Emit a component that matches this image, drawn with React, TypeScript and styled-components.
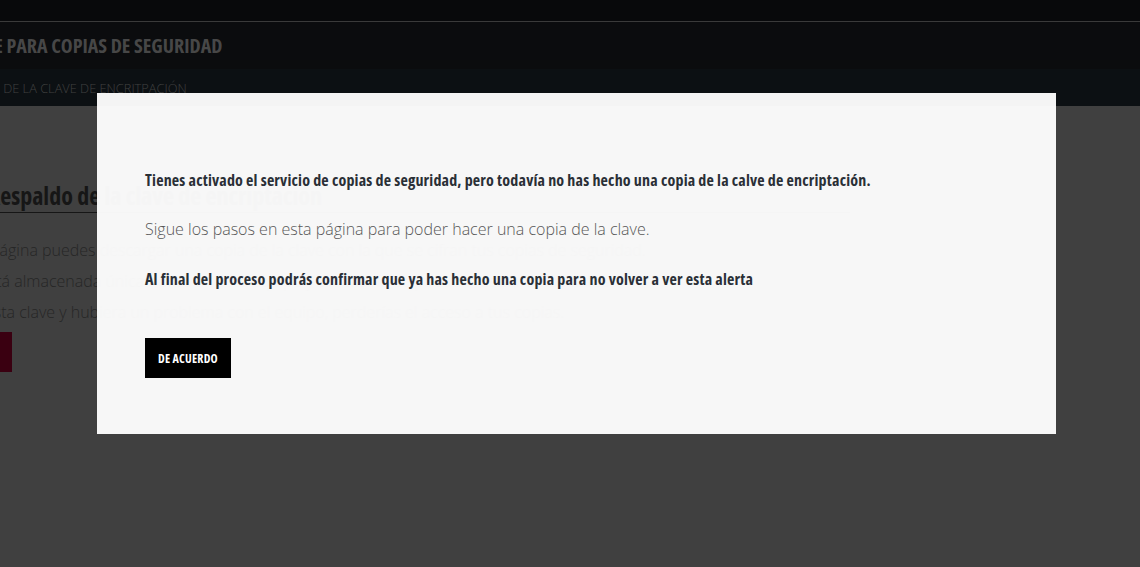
import { FC } from "react";
import styled, { createGlobalStyle } from "styled-components";

const GlobalStyle = createGlobalStyle`
  html, body {
    margin: 0;
    padding: 0;
    background: #404040;
    overflow: hidden;
  }
  body {
    font-family: "Open Sans", "Liberation Sans", sans-serif;
  }
`;

const condensed = `
  font-family: "Open Sans", "Liberation Sans", sans-serif;
  font-stretch: 75%;
  font-weight: 700;
`;

const Page = styled.div`
  position: relative;
  width: 1140px;
  height: 567px;
  overflow: hidden;
  background: #404040;
`;

const TopBar = styled.div`
  height: 21px;
  background: #08090b;
  border-bottom: 1px solid #3a3a3a;
`;

const TitleBar = styled.div`
  height: 47px;
  display: flex;
  align-items: center;
  background: #0b0c0e;
`;

const Title = styled.h1`
  ${condensed}
  margin: 0 0 0 -141px;
  font-size: 20px;
  line-height: 24px;
  color: #474747;
  white-space: nowrap;
`;

const SubBar = styled.div`
  height: 37px;
  display: flex;
  align-items: center;
  background: #0c1013;
`;

const Breadcrumb = styled.span`
  margin-left: -110px;
  padding-top: 1px;
  font-size: 12.8px;
  font-weight: 300;
  color: #404040;
  white-space: nowrap;
`;

const Content = styled.main`
  width: 850px;
  padding-top: 74px;
`;

const Heading = styled.h2`
  ${condensed}
  margin: 0 0 0 -12px;
  font-size: 24px;
  line-height: 32px;
  color: #161616;
  border-bottom: 1px solid #161616;
  white-space: nowrap;
`;

const Lines = styled.div`
  margin-top: 22px;
  display: flex;
  flex-direction: column;
`;

const Line = styled.p<{ $shift: number }>`
  margin: 0 0 0 ${({ $shift }) => -$shift}px;
  font-size: 16px;
  font-weight: 300;
  line-height: 31px;
  color: #262626;
  white-space: nowrap;
`;

const RedButton = styled.div`
  margin: 4px 0 0 -90px;
  width: 102px;
  height: 40px;
  background: #3a0011;
`;

const Modal = styled.div`
  position: absolute;
  left: 97px;
  top: 93px;
  width: 959px;
  height: 341px;
  box-sizing: border-box;
  padding: 77px 48px 0;
  background: rgba(255, 255, 255, 0.955);
  display: flex;
  flex-direction: column;
  align-items: flex-start;
`;

const Strong = styled.p<{ $gap?: number }>`
  ${condensed}
  margin: ${({ $gap = 0 }) => $gap}px 0 0;
  font-size: 16px;
  line-height: 20px;
  letter-spacing: 0.18px;
  color: #2a2f36;
`;

const Light = styled.p`
  margin: 29px 0 0;
  font-size: 16px;
  font-weight: 300;
  line-height: 20px;
  color: #575757;
`;

const OkButton = styled.button`
  ${condensed}
  margin-top: 49px;
  height: 40px;
  padding: 0 13px;
  border: 0;
  background: #000;
  color: #fff;
  font-size: 12px;
  letter-spacing: 0.2px;
  cursor: pointer;
`;

const lines = [
  { shift: 10, text: "página puedes descargar una copia de la clave con la que se cifran tus copias de seguridad." },
  { shift: 20, text: "está almacenada únicamente en este equipo y sin ella no se pueden restaurar los datos." },
  { shift: 15, text: "esta clave y hubiera un problema con el equipo, perderías el acceso a tus copias." },
];

const App: FC = () => (
  <Page>
    <GlobalStyle />
    <TopBar />
    <TitleBar>
      <Title>SERVICIO DE CLAVE PARA COPIAS DE SEGURIDAD</Title>
    </TitleBar>
    <SubBar>
      <Breadcrumb>INICIO / RESPALDO DE LA CLAVE DE ENCRITPACIÓN</Breadcrumb>
    </SubBar>
    <Content>
      <Heading>Respaldo de la clave de encriptación</Heading>
      <Lines>
        {lines.map((l) => (
          <Line key={l.shift} $shift={l.shift}>
            {l.text}
          </Line>
        ))}
      </Lines>
      <RedButton />
    </Content>
    <Modal>
      <Strong>
        Tienes activado el servicio de copias de seguridad, pero todavía no has hecho una copia de la calve de encriptación.
      </Strong>
      <Light>Sigue los pasos en esta página para poder hacer una copia de la clave.</Light>
      <Strong $gap={30}>
        Al final del proceso podrás confirmar que ya has hecho una copia para no volver a ver esta alerta
      </Strong>
      <OkButton>DE ACUERDO</OkButton>
    </Modal>
  </Page>
);

export default App;
